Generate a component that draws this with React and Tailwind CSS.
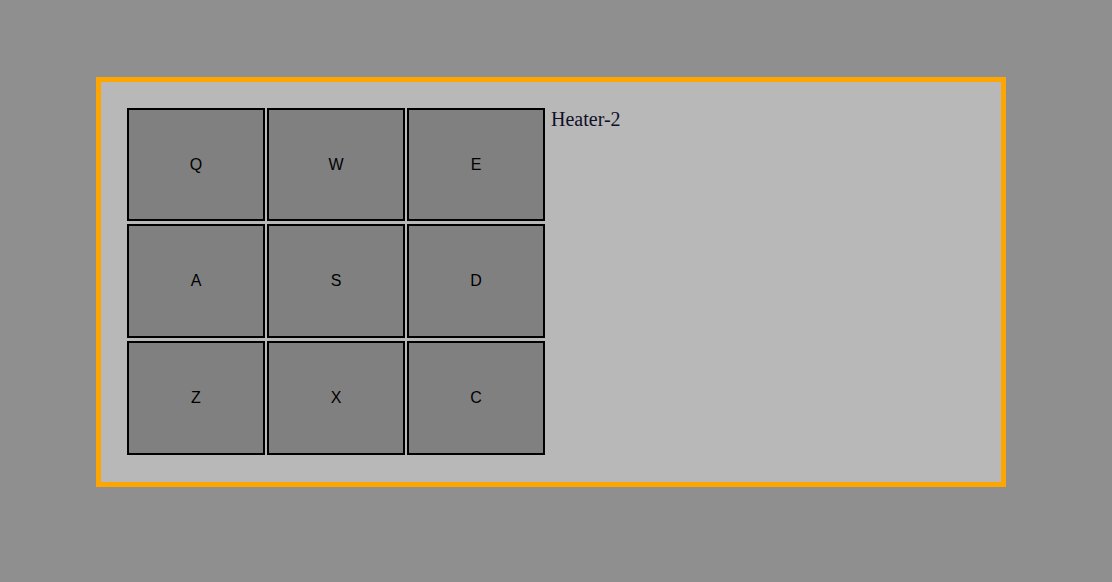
const pads = ['Q', 'W', 'E', 'A', 'S', 'D', 'Z', 'X', 'C'];

export default function App() {
  return (
    <div className="min-h-[582px] w-full bg-[#8f8f8f] pt-[77px] pl-[96px]">
      <div className="flex w-[910px] h-[410px] border-[5px] border-[#ffa500] bg-[#b8b8b8] pl-[26px] pt-[26px]">
        <div className="grid grid-cols-[138px_138px_138px] grid-rows-[113px_114px_114px] gap-x-[2px] gap-y-[3px] h-max">
          {pads.map((key) => (
            <div
              key={key}
              className="flex items-center justify-center border-2 border-black bg-[#808080] text-[16px] text-black"
              style={{ fontFamily: '"Liberation Sans", Arial, sans-serif' }}
            >
              {key}
            </div>
          ))}
        </div>
        <div
          className="ml-[6px] -mt-[1px] text-[20px] leading-[24px] text-[#10102a]"
          style={{ fontFamily: '"Liberation Serif", "Times New Roman", serif' }}
        >
          Heater-2
        </div>
      </div>
    </div>
  );
}
